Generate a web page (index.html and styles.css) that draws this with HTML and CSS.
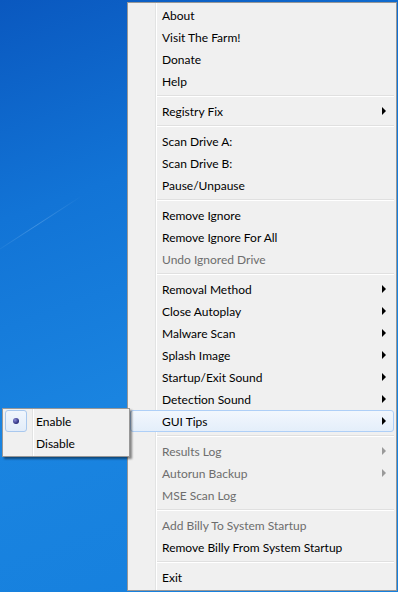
FILE: index.html
```html
<!doctype html>
<html lang="en">
<head>
  <title>Menu</title>
  <meta charset="UTF-8">
  <meta name="viewport" content="width=device-width, initial-scale=1">
  <link rel="stylesheet" href="styles.css">
</head>
<body>
  <div class="desktop">
    <div class="streak"></div>

    <div class="menu main-menu">
      <div class="item">About</div>
      <div class="item">Visit The Farm!</div>
      <div class="item">Donate</div>
      <div class="item">Help</div>
      <div class="sep"></div>
      <div class="item sub">Registry Fix</div>
      <div class="sep"></div>
      <div class="item">Scan Drive A:</div>
      <div class="item">Scan Drive B:</div>
      <div class="item">Pause/Unpause</div>
      <div class="sep"></div>
      <div class="item">Remove Ignore</div>
      <div class="item">Remove Ignore For All</div>
      <div class="item disabled">Undo Ignored Drive</div>
      <div class="sep"></div>
      <div class="item sub">Removal Method</div>
      <div class="item sub">Close Autoplay</div>
      <div class="item sub">Malware Scan</div>
      <div class="item sub">Splash Image</div>
      <div class="item sub">Startup/Exit Sound</div>
      <div class="item sub">Detection Sound</div>
      <div class="item sub active">GUI Tips</div>
      <div class="sep"></div>
      <div class="item sub disabled">Results Log</div>
      <div class="item sub disabled">Autorun Backup</div>
      <div class="item disabled">MSE Scan Log</div>
      <div class="sep"></div>
      <div class="item disabled">Add Billy To System Startup</div>
      <div class="item">Remove Billy From System Startup</div>
      <div class="sep"></div>
      <div class="item">Exit</div>
    </div>

    <div class="menu sub-menu">
      <div class="item checked"><span class="mark"><span class="dot"></span></span>Enable</div>
      <div class="item"><span class="mark"></span>Disable</div>
    </div>
  </div>
</body>
</html>
```

FILE: styles.css
```css
body {
  margin: 0;
  font-family: Lato, 'Noto Sans', Arial, sans-serif;
  font-size: 12px;
}
.desktop {
  position: relative;
  width: 398px;
  height: 592px;
  overflow: hidden;
  background: linear-gradient(160deg, #0a58bf 0%, #1274d6 30%, #1a84e0 60%, #157fdd 100%);
}
.streak {
  position: absolute;
  left: -10px;
  top: 255px;
  width: 110px;
  height: 1px;
  background: linear-gradient(90deg, rgba(255,255,255,0), rgba(200,230,255,0.25), rgba(255,255,255,0));
  transform: rotate(-33deg);
  transform-origin: left center;
}
.menu {
  position: absolute;
  background-color: #f0f0f0;
  border: 1px solid #979797;
  padding: 1px 2px 2px 2px;
  color: #000;
}
.main-menu {
  left: 127px;
  top: 2px;
  width: 264px;
  background-image: linear-gradient(90deg, transparent 27px, #e2e3e3 27px, #e2e3e3 28px, #fff 28px, #fff 29px, transparent 29px);
}
.sub-menu {
  left: 2px;
  top: 408px;
  width: 122px;
  z-index: 2;
  box-shadow: 2px 2px 2px rgba(0,0,0,0.45);
  background-image: linear-gradient(90deg, transparent 29px, #e2e3e3 29px, #e2e3e3 30px, #fff 30px, #fff 31px, transparent 31px);
}
.item {
  position: relative;
  height: 20px;
  line-height: 21px;
  border: 1px solid transparent;
  border-radius: 3px;
  padding-left: 31px;
  white-space: nowrap;
}
.item.disabled {
  color: #6d6d6d;
}
.item.sub::after {
  content: '';
  position: absolute;
  right: 7px;
  top: 6px;
  border-left: 4px solid #000;
  border-top: 4px solid transparent;
  border-bottom: 4px solid transparent;
}
.item.sub.disabled::after {
  border-left-color: #9a9a9a;
}
.item.active {
  border-color: #aecff7;
  background: linear-gradient(180deg, #f2f7fd, #e4eefa);
}
.sep {
  height: 8px;
  margin-left: 27px;
  background: linear-gradient(180deg, transparent 3px, #e0e0e0 3px, #e0e0e0 4px, #fff 4px, #fff 5px, transparent 5px);
}
.sub-menu .item {
  padding-left: 30px;
}
.mark {
  position: absolute;
  left: -1px;
  top: -1px;
  width: 22px;
  height: 22px;
  box-sizing: border-box;
  border-radius: 3px;
  display: flex;
  align-items: center;
  justify-content: center;
}
.checked .mark {
  border: 1px solid #a9c8ee;
  background: linear-gradient(180deg, #f1f6fd, #e2ecf9);
}
.dot {
  width: 6px;
  height: 6px;
  border-radius: 50%;
  background: radial-gradient(circle at 35% 35%, #8b8bd8, #262a7a 70%);
}
```
